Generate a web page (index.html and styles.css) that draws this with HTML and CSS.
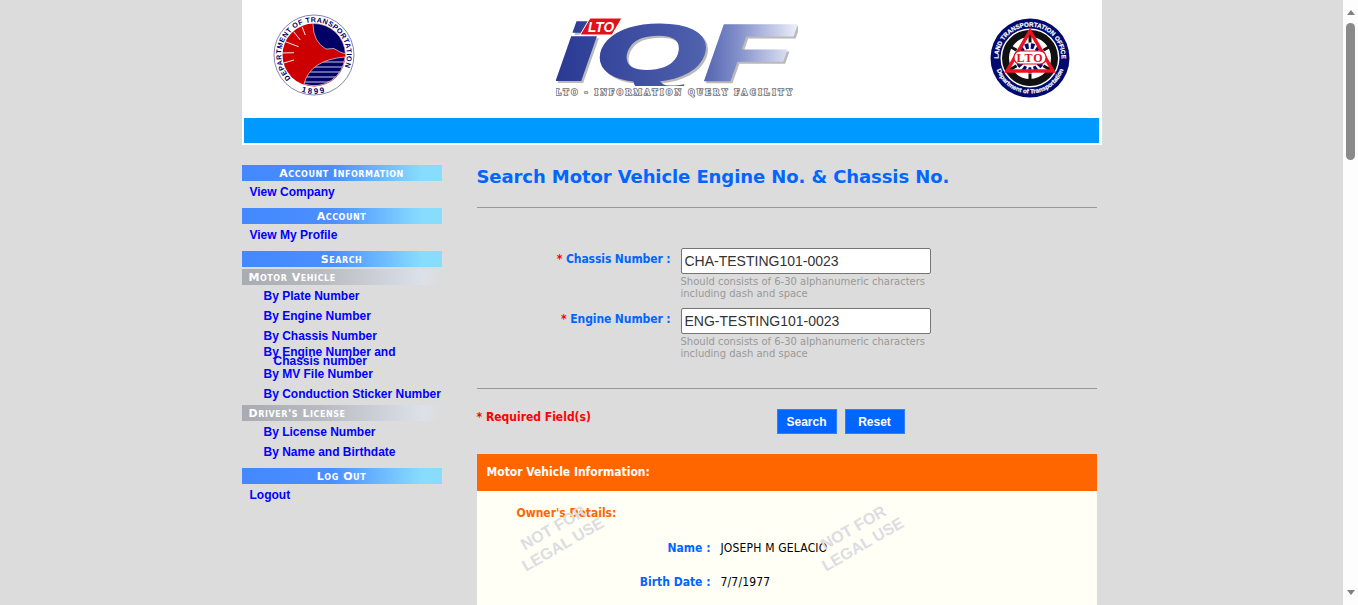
FILE: index.html
```html
<!DOCTYPE html>
<html lang="en">
<head>
  <meta charset="UTF-8">
  <title>LTO - Information Query Facility</title>
  <link rel="stylesheet" href="styles.css">
</head>
<body>

<div class="screen">
  <div class="page">
    <div class="wrap">

      <div class="header">
        <div class="logos">
          <!-- DOTr seal -->
          <svg class="seal-dotr" width="84" height="84" viewBox="0 0 84 84">
            <defs>
              <path id="dotrArc" d="M18.8 65.2 A32.8 32.8 0 1 1 65.2 65.2"/>
              <path id="dotrYear" d="M20 74 A39 39 0 0 0 64 74"/>
              <clipPath id="dotrLow"><path d="M73 44 A31 31 0 0 1 32 71 Q38 47 73 44 Z"/></clipPath>
            </defs>
            <circle cx="42" cy="42" r="40" fill="#fff" stroke="#66669c" stroke-width="0.8"/>
            <circle cx="42" cy="42" r="31.5" fill="#cc0000"/>
            <path d="M41 10.5 A31.5 31.5 0 0 1 73.4 41 L67 38.5 L62 35.5 L54 36 Q41 29 41 10.5 Z" fill="#000066" stroke="#fff" stroke-width="0.6"/>
            <path d="M73 44 A31 31 0 0 1 32 71 Q38 47 73 44 Z" fill="#000066" stroke="#fff" stroke-width="0.6"/>
            <g clip-path="url(#dotrLow)" stroke="#c8cce0" stroke-width="1.1">
              <path d="M30 49 H76 M30 54 H76 M30 59 H76 M30 64 H76 M30 69 H76"/>
            </g>
            <g stroke="#fff" stroke-width="0.9">
              <path d="M10 40 L22 39.7 M11.7 50 L22 47 M13.3 28.7 L26.7 33.7 M21.7 18.7 L28.3 27 M30 13.7 L33.3 22"/>
            </g>
            <text class="seal-text"><textPath href="#dotrArc">DEPARTMENT OF TRANSPORTATION</textPath></text>
            <text class="seal-year"><textPath href="#dotrYear" startOffset="50%">1899</textPath></text>
          </svg>

          <!-- iQF logo -->
          <svg class="logo-iqf" width="242" height="85" viewBox="0 0 242 85">
            <defs>
              <linearGradient id="iqfFill" x1="0" x2="1" y1="0" y2="0">
                <stop offset="0" stop-color="#2a3a94"/>
                <stop offset="0.6" stop-color="#4f60ad"/>
                <stop offset="0.75" stop-color="#7e8cc8"/>
                <stop offset="1" stop-color="#e8ebf8"/>
              </linearGradient>
              <clipPath id="iqfClip"><rect x="0" y="0" width="242" height="69"/></clipPath>
            </defs>
            <g clip-path="url(#iqfClip)">
              <text class="iqf-shadow" x="3" y="65" textLength="234" lengthAdjust="spacingAndGlyphs">iQF</text>
              <text class="iqf-main" x="1" y="63" textLength="234" lengthAdjust="spacingAndGlyphs">iQF</text>
            </g>
            <polygon points="34,1 66,1 56,18 24,18" fill="#e0101c" stroke="#fff" stroke-width="1"/>
            <text class="iqf-lto" x="32" y="15" textLength="26" lengthAdjust="spacingAndGlyphs">LTO</text>
            <text class="iqf-caption" x="0" y="78" textLength="236" lengthAdjust="spacing">LTO - INFORMATION QUERY FACILITY</text>
          </svg>

          <!-- LTO seal -->
          <svg class="seal-lto" width="80" height="80" viewBox="0 0 80 80">
            <defs>
              <path id="ltoTop" d="M9.26 46.87 A31.5 31.5 0 1 1 70.74 46.87"/>
              <path id="ltoBottom" d="M5 44 A35.2 35.2 0 0 0 75 44"/>
            </defs>
            <circle cx="40" cy="40" r="39.5" fill="#000a6e"/>
            <text class="lto-ring"><textPath href="#ltoTop" startOffset="50%">LAND TRANSPORTATION OFFICE</textPath></text>
            <text class="lto-ring lto-ring-low"><textPath href="#ltoBottom" startOffset="50%">Department of Transportation</textPath></text>
            <circle cx="40" cy="40" r="29.5" fill="#fff"/>
            <circle cx="40" cy="40" r="24.5" fill="none" stroke="#111" stroke-width="7"/>
            <circle cx="40" cy="40" r="20" fill="#fff"/>
            <path d="M40 18 V62 M21 29 L59 51 M59 29 L21 51" stroke="#111" stroke-width="3"/>
            <circle cx="40" cy="40" r="15.5" fill="#fff"/>
            <circle cx="40" cy="40" r="12" fill="none" stroke="#000a6e" stroke-width="5.5" stroke-dasharray="3.5 2.2"/>
            <path d="M40 13 L63 53 H17 Z" fill="none" stroke="#ee1122" stroke-width="3.5"/>
            <rect x="24" y="33" width="32" height="13" rx="6" fill="#fff" stroke="#dd1122" stroke-width="1.2"/>
            <text class="lto-name" x="40" y="44">LTO</text>
          </svg>
        </div>
        <div class="header-bar"></div>
      </div>

      <div class="content">
        <div class="sidebar">
          <div class="nav-group">
            <div class="nav-head">Account Information</div>
            <a class="nav-link" href="#">View Company</a>
          </div>
          <div class="nav-group">
            <div class="nav-head">Account</div>
            <a class="nav-link" href="#">View My Profile</a>
          </div>
          <div class="nav-group">
            <div class="nav-head">Search</div>
            <div class="nav-sub">Motor Vehicle</div>
            <a class="nav-link indent" href="#">By Plate Number</a>
            <a class="nav-link indent" href="#">By Engine Number</a>
            <a class="nav-link indent" href="#">By Chassis Number</a>
            <a class="nav-link indent wrapped" href="#">By Engine Number and Chassis number</a>
            <a class="nav-link indent" href="#">By MV File Number</a>
            <a class="nav-link indent" href="#">By Conduction Sticker Number</a>
            <div class="nav-sub">Driver's License</div>
            <a class="nav-link indent" href="#">By License Number</a>
            <a class="nav-link indent" href="#">By Name and Birthdate</a>
          </div>
          <div class="nav-group">
            <div class="nav-head">Log Out</div>
            <a class="nav-link" href="#">Logout</a>
          </div>
        </div>

        <div class="main">
          <h1 class="title">Search Motor Vehicle Engine No. &amp; Chassis No.</h1>
          <div class="rule"></div>

          <div class="form">
            <div class="form-row">
              <label class="form-label"><span class="req">*</span> Chassis Number :</label>
              <div>
                <input class="form-input" type="text" value="CHA-TESTING101-0023">
                <div class="hint">Should consists of 6-30 alphanumeric characters including dash and space</div>
              </div>
            </div>
            <div class="form-row">
              <label class="form-label"><span class="req">*</span> Engine Number :</label>
              <div>
                <input class="form-input" type="text" value="ENG-TESTING101-0023">
                <div class="hint">Should consists of 6-30 alphanumeric characters including dash and space</div>
              </div>
            </div>
          </div>

          <div class="rule"></div>

          <div class="actions">
            <div class="required">* Required Field(s)</div>
            <div class="buttons">
              <button class="btn" type="button">Search</button>
              <button class="btn" type="button">Reset</button>
            </div>
          </div>

          <div class="panel">
            <div class="panel-head">Motor Vehicle Information:</div>
            <div class="panel-body">
              <div class="section-title">Owner's Details:</div>
              <div class="info-row"><span class="info-label">Name :</span><span class="info-value">JOSEPH M GELACIO</span></div>
              <div class="info-row"><span class="info-label">Birth Date :</span><span class="info-value">7/7/1977</span></div>
              <div class="watermark mark-left">NOT FOR<br>LEGAL USE</div>
              <div class="watermark mark-right">NOT FOR<br>LEGAL USE</div>
            </div>
          </div>
        </div>
      </div>

    </div>
  </div>

  <div class="scrollbar">
    <div class="arrow-up"></div>
    <div class="thumb"></div>
    <div class="track"></div>
    <div class="arrow-down"></div>
  </div>
</div>

</body>
</html>
```

FILE: styles.css
```css
html, body {
  margin: 0;
  padding: 0;
  height: 100%;
  overflow: hidden;
}
body {
  background: #dcdcdc;
  font-family: "Liberation Sans", Arial, sans-serif;
  font-size: 12px;
}
.screen {
  display: flex;
  height: 605px;
}
.page {
  flex: 1;
  overflow: hidden;
}
.wrap {
  width: 860px;
  margin: 0 auto;
}

/* header */
.header {
  background: #fff;
  height: 145px;
  overflow: hidden;
}
.logos {
  display: flex;
  align-items: flex-start;
  height: 118px;
}
.seal-dotr {
  margin: 13px 0 0 30px;
}
.logo-iqf {
  margin: 17px 0 0 200px;
}
.seal-lto {
  margin: 18px 0 0 192px;
}
.header-bar {
  height: 25px;
  margin: 0 3px 0 2px;
  background: #0099ff;
}
.seal-text {
  font: bold 7.2px "Liberation Sans", Arial, sans-serif;
  fill: #000066;
  letter-spacing: 0.4px;
}
.seal-year {
  font: bold 8px "Liberation Sans", Arial, sans-serif;
  fill: #000066;
  letter-spacing: 2px;
  text-anchor: middle;
}
.iqf-main, .iqf-shadow {
  font: italic bold 78px "Liberation Sans", Arial, sans-serif;
}
.iqf-main {
  fill: url(#iqfFill);
  stroke: url(#iqfFill);
  stroke-width: 3.5px;
}
.iqf-shadow {
  fill: #8d8d8d;
  stroke: #8d8d8d;
  stroke-width: 3.5px;
  opacity: 0.6;
}
.iqf-lto {
  font: italic bold 14px "Liberation Sans", Arial, sans-serif;
  fill: #fff;
}
.iqf-caption {
  font: bold 8px "Liberation Serif", serif;
  fill: #fff;
  stroke: #6f6f78;
  stroke-width: 1.6px;
  paint-order: stroke;
}
.lto-ring {
  font: bold 6.2px "Liberation Sans", Arial, sans-serif;
  fill: #fff;
  stroke: #fff;
  stroke-width: 0.2px;
  text-anchor: middle;
}
.lto-ring-low {
  font-size: 6.2px;
}
.lto-name {
  font: bold 12px "Liberation Serif", serif;
  fill: #dd1122;
  text-anchor: middle;
  letter-spacing: 1px;
}

/* layout */
.content {
  display: flex;
  gap: 35px;
  padding-top: 20px;
}
.sidebar {
  width: 200px;
  flex: none;
}
.main {
  width: 620px;
  flex: none;
}

/* sidebar */
.nav-group {
  margin-bottom: 6px;
}
.nav-head, .nav-sub {
  height: 16px;
  color: #fff;
  font: bold 11px/18px "DejaVu Sans", sans-serif;
  font-variant: small-caps;
  letter-spacing: 0.55px;
}
.nav-head {
  margin-bottom: 1px;
  text-align: center;
  background: linear-gradient(to right, #4488ff 0%, #4a8eff 45%, #88ddff 90%);
}
.nav-sub {
  margin: 1px 0;
  padding-left: 7px;
  background: linear-gradient(to right, #a8abb2 0%, #b8bbc2 40%, #dce0e8 90%, #dcdcdc 100%);
}
.nav-head + .nav-sub {
  margin-top: 2px;
}
.nav-link {
  display: block;
  height: 20px;
  line-height: 20px;
  padding-left: 8px;
  color: #0000ff;
  font-weight: bold;
  text-decoration: none;
  white-space: nowrap;
}
.nav-link.indent {
  padding-left: 22px;
}
.nav-link.wrapped {
  height: 16px;
  padding: 2px 30px 0 32px;
  line-height: 9px;
  text-indent: -10px;
  white-space: normal;
}

/* main column */
.title {
  margin: 0;
  height: 42px;
  color: #0066ff;
  font: bold 18px/23px "DejaVu Sans", sans-serif;
  letter-spacing: -0.09px;
}
.rule {
  height: 1px;
  background: #999;
}
.form {
  padding: 40px 0 20px;
}
.form-row {
  display: grid;
  grid-template-columns: 194px 250px;
  column-gap: 10px;
  height: 60px;
}
.form-label {
  padding-top: 1px;
  text-align: right;
  color: #0066ff;
  font: bold 12px/20px "DejaVu Sans Condensed", "DejaVu Sans", sans-serif;
  font-stretch: condensed;
  letter-spacing: -0.1px;
}
.req {
  color: #ff0000;
}
.form-input {
  display: block;
  box-sizing: border-box;
  width: 250px;
  height: 26px;
  padding: 0 3px;
  border: 1px solid #767676;
  border-radius: 2px;
  background: #fff;
  color: #333;
  font: 14px "Liberation Sans", Arial, sans-serif;
}
.hint {
  margin-top: 2px;
  color: #999;
  font: 10px/12px "DejaVu Sans", sans-serif;
}
.actions {
  display: flex;
  height: 65px;
}
.required {
  width: 300px;
  padding-top: 18px;
  color: #ff0000;
  font: bold 12px/20px "DejaVu Sans Condensed", "DejaVu Sans", sans-serif;
}
.buttons {
  display: flex;
  gap: 8px;
  padding-top: 20px;
}
.btn {
  width: 60px;
  height: 25px;
  padding: 0;
  border: 1px solid #2f80ff;
  background: #0066ff;
  color: #fff;
  font: bold 12px "Liberation Sans", Arial, sans-serif;
}

/* result panel */
.panel-head {
  height: 37px;
  padding-left: 10px;
  background: #ff6600;
  color: #fff;
  font: bold 12px/37px "DejaVu Sans Condensed", "DejaVu Sans", sans-serif;
}
.panel-body {
  position: relative;
  height: 300px;
  background: #fffff5;
  color: #000;
  font: 12px "DejaVu Sans Condensed", "DejaVu Sans", sans-serif;
}
.section-title {
  padding: 14px 0 0 40px;
  height: 29px;
  color: #ff6600;
  font-weight: bold;
  line-height: 16px;
}
.info-row {
  display: flex;
  height: 34px;
  line-height: 20px;
  padding-top: 4px;
  box-sizing: border-box;
}
.info-label {
  width: 234px;
  margin-right: 10px;
  text-align: right;
  color: #0066ff;
  font-weight: bold;
}
.info-value {
  letter-spacing: 0.18px;
}
.watermark {
  position: absolute;
  top: 26px;
  width: 120px;
  text-align: center;
  color: #dcdde2;
  font: bold 16px/19px "Liberation Sans", Arial, sans-serif;
  transform: rotate(-30deg);
}
.mark-left {
  left: 21px;
}
.mark-right {
  left: 321px;
}

/* scrollbar */
.scrollbar {
  display: flex;
  flex-direction: column;
  align-items: center;
  width: 15px;
  flex: none;
  background: #fdfdfd;
}
.arrow-up, .arrow-down {
  width: 0;
  height: 0;
  border-left: 4.5px solid transparent;
  border-right: 4.5px solid transparent;
}
.arrow-up {
  margin: 10px 0 8px;
  border-bottom: 5px solid #808080;
}
.arrow-down {
  margin: 0 0 10px;
  border-top: 5px solid #808080;
}
.thumb {
  width: 9px;
  height: 137px;
  border-radius: 5px;
  background: #8a8a8a;
}
.track {
  flex: 1;
}
```
